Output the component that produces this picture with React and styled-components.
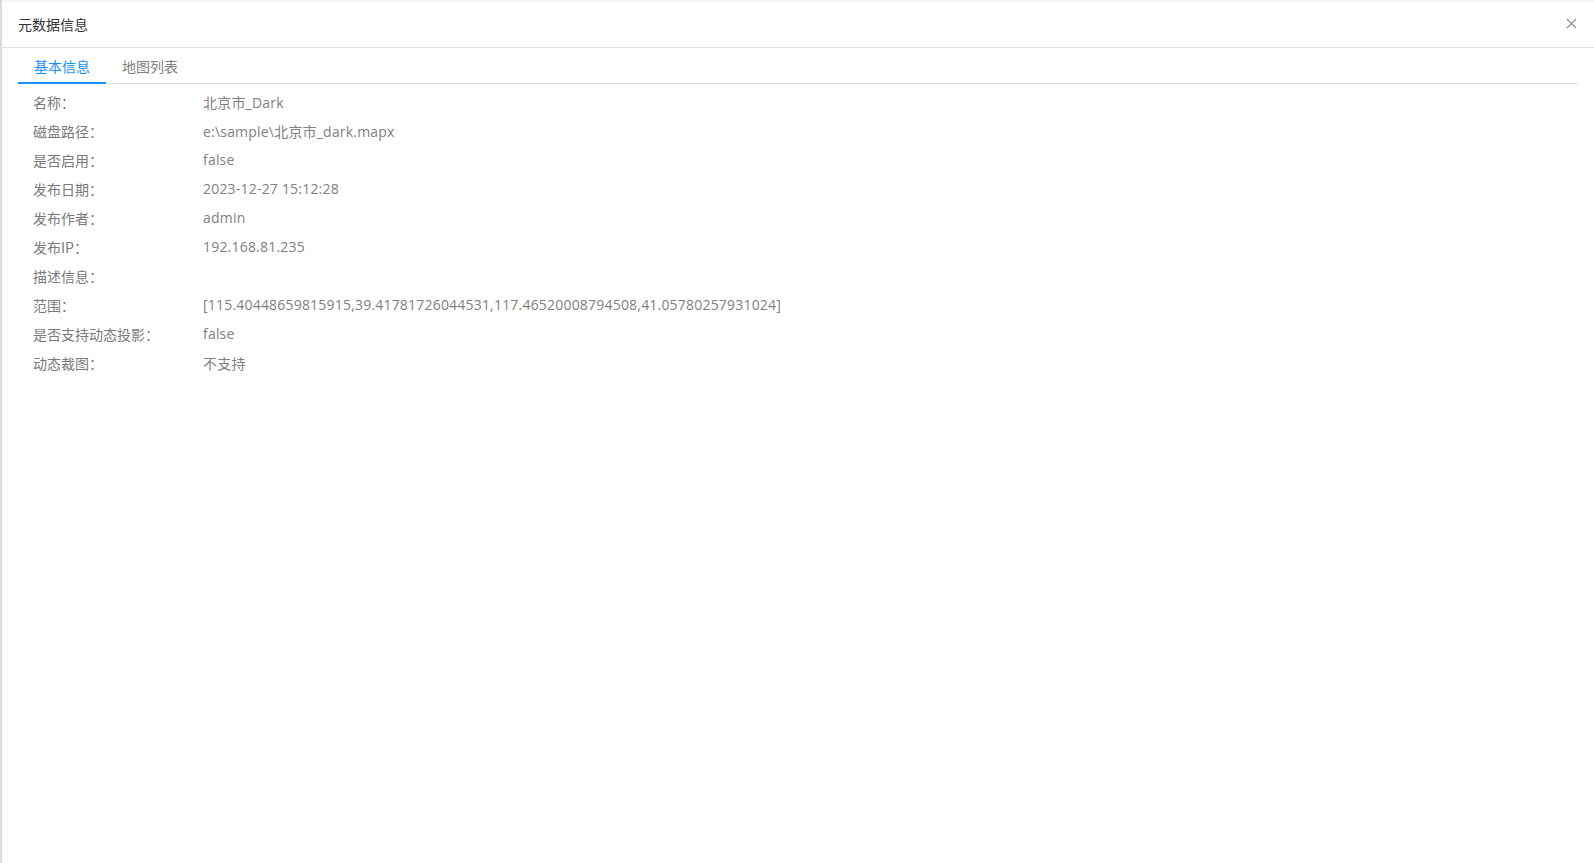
import React from "react";
import styled, { createGlobalStyle } from "styled-components";

const Global = createGlobalStyle`
  html, body { margin: 0; padding: 0; background: #fff; }
  body { font-family: "Open Sans", "Noto Sans CJK SC", sans-serif; }
  * { box-sizing: border-box; }
`;

const Page = styled.div`
  display: flex;
  height: 100vh;
  width: 100%;
  background: #fff;
`;

const Strip = styled.div`
  width: 2px;
  flex: none;
  background: #dcdcdc;
`;

const Panel = styled.div`
  flex: 1;
  display: flex;
  flex-direction: column;
  background: #fff;
  box-shadow: inset 0 4px 4px -3px rgba(0, 0, 0, 0.07);
`;

const Header = styled.div`
  height: 48px;
  flex: none;
  display: flex;
  align-items: center;
  justify-content: space-between;
  padding: 0 17px 0 16px;
  border-bottom: 1px solid #e3e3e3;
`;

const Title = styled.div`
  font-size: 14px;
  color: #333;
  font-family: "Noto Sans CJK SC", sans-serif;
`;

const Close = styled.button`
  border: 0;
  background: none;
  padding: 0;
  width: 12px;
  height: 12px;
  display: flex;
  align-items: center;
  justify-content: center;
  cursor: pointer;
`;

const Body = styled.div`
  padding: 0 16px;
`;

const Tabs = styled.div`
  display: flex;
  height: 36px;
  border-bottom: 1px solid #dcdcdc;
`;

const Tab = styled.div`
  position: relative;
  padding: 0 16px;
  display: flex;
  align-items: center;
  font-size: 14px;
  font-family: "Noto Sans CJK SC", sans-serif;
  color: ${(p) => (p.$active ? "#1890ff" : "#808080")};
  &::after {
    content: "";
    position: absolute;
    left: 0;
    right: 0;
    bottom: -1px;
    height: 2px;
    background: ${(p) => (p.$active ? "#1890ff" : "transparent")};
  }
`;

const List = styled.div`
  padding-top: 3px;
`;

const Row = styled.div`
  display: flex;
  height: 29px;
  align-items: center;
  font-size: 14px;
`;

const Label = styled.div`
  width: 185px;
  padding-left: 15px;
  color: #7a7a7a;
  font-family: "Noto Sans CJK SC", sans-serif;
`;

const Value = styled.div`
  color: #808080;
  font-family: "Open Sans", "Noto Sans CJK SC", sans-serif;
  letter-spacing: 0.2px;
`;

const rows = [
  ["名称：", "北京市_Dark"],
  ["磁盘路径：", "e:\\sample\\北京市_dark.mapx"],
  ["是否启用：", "false"],
  ["发布日期：", "2023-12-27 15:12:28"],
  ["发布作者：", "admin"],
  ["发布IP：", "192.168.81.235"],
  ["描述信息：", ""],
  ["范围：", "[115.40448659815915,39.41781726044531,117.46520008794508,41.05780257931024]"],
  ["是否支持动态投影：", "false"],
  ["动态裁图：", "不支持"],
];

export default function App() {
  return (
    <>
      <Global />
      <Page>
        <Strip />
        <Panel>
          <Header>
            <Title>元数据信息</Title>
            <Close aria-label="close">
              <svg width="11" height="11" viewBox="0 0 11 11">
                <path d="M1 1L10 10M10 1L1 10" stroke="#8c8c8c" strokeWidth="1.1" />
              </svg>
            </Close>
          </Header>
          <Body>
            <Tabs>
              <Tab $active>基本信息</Tab>
              <Tab>地图列表</Tab>
            </Tabs>
            <List>
              {rows.map(([k, v]) => (
                <Row key={k}>
                  <Label>{k}</Label>
                  <Value>{v}</Value>
                </Row>
              ))}
            </List>
          </Body>
        </Panel>
      </Page>
    </>
  );
}
